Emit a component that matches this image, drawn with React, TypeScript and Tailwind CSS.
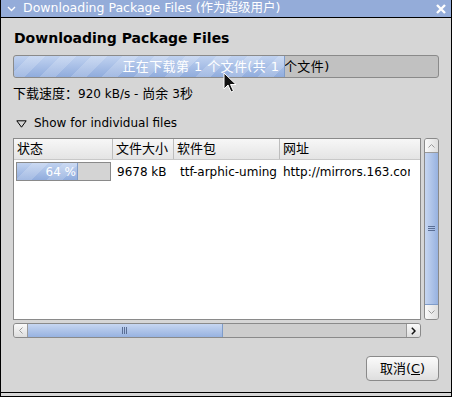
import React from 'react';

const sans = "font-['DejaVu_Sans','Noto_Sans_CJK_SC',sans-serif]";

const fillBg =
  'bg-[repeating-linear-gradient(135deg,rgba(255,255,255,0)_0_11px,rgba(255,255,255,0.18)_11px_22px),linear-gradient(#c0d2f0,#90acdd)]';

function Cursor() {
  return (
    <svg className="absolute left-[222px] top-[72px]" width="14" height="22" viewBox="0 0 14 22">
      <path d="M1 1 L1 17 L5 13 L8 20 L10.5 19 L7.5 12.5 L13 12.5 Z" fill="#111" stroke="#fff" strokeWidth="1" />
    </svg>
  );
}

function Header({ label, width, last }: { label: string; width: string; last?: boolean }) {
  return (
    <div className={`${width} h-full flex items-center pl-[3px] ${last ? '' : 'border-r border-[#bdbdbd]'}`}>
      {label}
    </div>
  );
}

export default function App() {
  return (
    <div className={`w-[452px] h-[397px] bg-[#d6d6d6] border-x border-black flex flex-col text-[13px] text-black ${sans} relative overflow-hidden`}>
      {/* title bar */}
      <div className="h-[18px] bg-[#94acd9] border-b border-black flex items-center text-white text-[12.5px] shrink-0">
        <svg className="ml-[6px] mr-[7px]" width="9" height="6" viewBox="0 0 9 6">
          <path d="M1 1 L4.5 4.5 L8 1" fill="none" stroke="#fff" strokeWidth="1.4" />
        </svg>
        <span className="leading-none">Downloading Package Files (作为超级用户)</span>
        <svg className="ml-auto mr-[5px]" width="10" height="10" viewBox="0 0 10 10">
          <path d="M1 1 L9 9 M9 1 L1 9" stroke="#fff" strokeWidth="2.4" />
        </svg>
      </div>

      {/* body */}
      <div className="flex-1 flex flex-col px-[12px] border-b border-black">
        <div className="mt-[12px] text-[14px] font-bold leading-[17px] pl-[1px]">
          Downloading Package Files
        </div>

        <div className="mt-[8px] relative h-[23px] rounded-[3px] border border-[#8a8a8a] bg-[#c1c1c1] tracking-[0.4px]">
          <div className="absolute inset-0 flex items-center justify-center whitespace-nowrap">正在下载第 1 个文件(共 1 个文件)</div>
          <div className={`absolute left-0 top-0 bottom-0 w-[271px] overflow-hidden rounded-l-[3px] border-r border-[#7f9cc9] ${fillBg}`}>
            <div className="absolute left-0 top-0 bottom-0 w-[424px] flex items-center justify-center text-white whitespace-nowrap">
              正在下载第 1 个文件(共 1 个文件)
            </div>
          </div>
        </div>

        <div className="mt-[7px] leading-[17px]">
          下载速度：<span className="text-[12px]">920 kB/s - </span>尚余 <span className="text-[12px]">3</span>秒
        </div>

        <div className="mt-[12px] flex items-center leading-[17px] text-[12px]">
          <svg className="ml-[3px] mr-[7px]" width="11" height="8" viewBox="0 0 11 8">
            <path d="M0.8 0.8 L10.2 0.8 L5.5 7.2 Z" fill="none" stroke="#000" strokeWidth="1" />
          </svg>
          Show for individual files
        </div>

        {/* list + scrollbars */}
        <div className="mt-[6px] flex gap-[3px]">
          <div className="w-[408px] h-[182px] bg-white border border-[#8a8a8a] flex flex-col overflow-hidden">
            <div className="h-[21px] flex items-center bg-[linear-gradient(#f7f7f7,#e4e4e4)] border-b border-[#c8c8c8] shrink-0">
              <Header label="状态" width="w-[99px]" />
              <Header label="文件大小" width="w-[61px]" />
              <Header label="软件包" width="w-[106px]" />
              <Header label="网址" width="flex-1" last />
            </div>
            <div className="h-[23px] flex items-center whitespace-nowrap text-[12px]">
              <div className="w-[99px] pl-[2px]">
                <div className="relative w-[95px] h-[19px] border border-[#8a8a8a] bg-[#d4d4d4]">
                  <div className={`absolute left-0 top-0 bottom-0 w-[61px] ${fillBg} border-r border-[#7f9cc9] flex items-center justify-end pr-[1px] text-white`}>
                    64 %
                  </div>
                </div>
              </div>
              <div className="w-[61px] pl-[4px]">9678 kB</div>
              <div className="w-[106px] pl-[6px]">ttf-arphic-uming</div>
              <div className="flex-1 flex mr-[2px]">
                <div className="w-[130px] pl-[3px] overflow-hidden">http://mirrors.163.com/ubuntu</div>
              </div>
            </div>
          </div>

          {/* vertical scrollbar */}
          <div className="w-[15px] h-[182px] flex flex-col rounded-[3px] border border-[#8a8a8a] bg-[#cfcfcf] overflow-hidden">
            <div className="h-[14px] bg-[linear-gradient(90deg,#fafafa,#dedede)] border-b border-[#9a9a9a] flex items-center justify-center">
              <svg width="7" height="4" viewBox="0 0 7 4"><path d="M0.5 3.5 L3.5 0.5 L6.5 3.5" fill="none" stroke="#9a9a9a" /></svg>
            </div>
            <div className="flex-1 bg-[linear-gradient(90deg,#c6d6f1,#97b2e0)] border-b border-[#7f9cc9] flex items-center justify-center">
              <svg width="7" height="6" viewBox="0 0 7 6"><path d="M0 0.5 H7 M0 2.5 H7 M0 4.5 H7" stroke="#5a6e94" /></svg>
            </div>
            <div className="h-[14px] bg-[linear-gradient(90deg,#fafafa,#dedede)] flex items-center justify-center">
              <svg width="7" height="4" viewBox="0 0 7 4"><path d="M0.5 0.5 L3.5 3.5 L6.5 0.5" fill="none" stroke="#9a9a9a" /></svg>
            </div>
          </div>
        </div>

        {/* horizontal scrollbar */}
        <div className="mt-[3px] w-[408px] h-[15px] flex rounded-[3px] border border-[#8a8a8a] bg-[#cdcdcd] overflow-hidden">
          <div className="w-[14px] bg-[linear-gradient(#fafafa,#dedede)] border-r border-[#9a9a9a] flex items-center justify-center">
            <svg width="4" height="7" viewBox="0 0 4 7"><path d="M3.5 0.5 L0.5 3.5 L3.5 6.5" fill="none" stroke="#9a9a9a" /></svg>
          </div>
          <div className="w-[195px] bg-[linear-gradient(#c6d6f1,#97b2e0)] border-r border-[#7f9cc9] flex items-center justify-center">
            <svg width="6" height="7" viewBox="0 0 6 7"><path d="M0.5 0 V7 M2.5 0 V7 M4.5 0 V7" stroke="#5a6e94" /></svg>
          </div>
          <div className="flex-1" />
          <div className="w-[14px] bg-[linear-gradient(#fafafa,#dedede)] border-l border-[#9a9a9a] flex items-center justify-center">
            <svg width="5" height="8" viewBox="0 0 5 8"><path d="M0.8 0.8 L4 4 L0.8 7.2" fill="none" stroke="#111" strokeWidth="1.5" /></svg>
          </div>
        </div>

        <div className="mt-[18px] flex justify-end">
          <button className="w-[73px] h-[25px] rounded-[4px] border border-[#8a8a8a] bg-[linear-gradient(#fbfbfb,#dedede)] flex items-center justify-center text-[13px]">
            取消(<span className="underline">C</span>)
          </button>
        </div>
      </div>

      <div className="h-[4px] border-b border-black shrink-0" />

      <Cursor />
    </div>
  );
}
